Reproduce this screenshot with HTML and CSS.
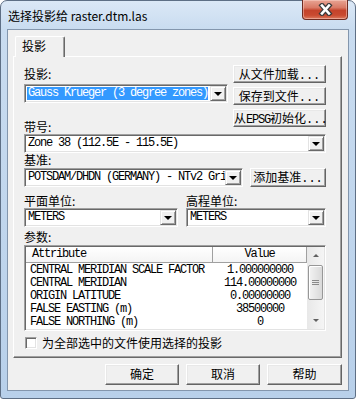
FILE: index.html
```html
<!DOCTYPE html>
<html lang="zh-CN">

<head>
    <meta charset="UTF-8">
    <title>选择投影给 raster.dtm.las</title>
    <link rel="stylesheet" href="styles.css">
</head>

<body>
    <div class="window">
        <div class="titlebar">
            <span class="title">选择投影给 raster.dtm.las</span>
            <div class="close-btn">
                <svg width="17" height="13" viewBox="0 0 17 13">
                    <path d="M5 2.5 L12 10.5 M12 2.5 L5 10.5" stroke="#3b3b3b" stroke-width="5" stroke-linecap="square" fill="none"/>
                    <path d="M5 2.5 L12 10.5 M12 2.5 L5 10.5" stroke="#ffffff" stroke-width="2.6" stroke-linecap="square" fill="none"/>
                </svg>
            </div>
        </div>

        <div class="client">
            <div class="tabs">
                <div class="tab">投影</div>
            </div>

            <div class="panel">
                <div class="top-row">
                    <div class="top-left">
                        <div class="label">投影:</div>
                        <div class="combo combo-proj">
                            <span class="combo-text"><span class="sel">Gauss Krueger (3 degree zones)</span></span>
                            <span class="drop"></span>
                        </div>
                        <div class="label label-zone">带号:</div>
                    </div>
                    <div class="side-buttons">
                        <div class="btn btn-side">从文件加载<span class="mono dots">...</span></div>
                        <div class="btn btn-side">保存到文件<span class="mono dots">...</span></div>
                        <div class="btn btn-side">从<span class="mono">EPSG</span>初始化<span class="mono dots">...</span></div>
                    </div>
                </div>

                <div class="combo combo-full">
                    <span class="combo-text">Zone 38 (112.5E - 115.5E)</span>
                    <span class="drop"></span>
                </div>

                <div class="label">基准:</div>
                <div class="datum-row">
                    <div class="combo combo-datum">
                        <span class="combo-text">POTSDAM/DHDN (GERMANY) - NTv2 Grid</span>
                        <span class="drop"></span>
                    </div>
                    <div class="btn btn-datum">添加基准<span class="mono dots">...</span></div>
                </div>

                <div class="units-grid">
                    <div class="label">平面单位:</div>
                    <div class="label">高程单位:</div>
                    <div class="combo">
                        <span class="combo-text">METERS</span>
                        <span class="drop"></span>
                    </div>
                    <div class="combo">
                        <span class="combo-text">METERS</span>
                        <span class="drop"></span>
                    </div>
                </div>

                <div class="label label-params">参数:</div>
                <div class="listbox">
                    <div class="list-main">
                        <div class="list-head">
                            <span class="col-attr">Attribute</span>
                            <span class="col-val">Value</span>
                        </div>
                        <div class="list-row"><span class="col-attr">CENTRAL MERIDIAN SCALE FACTOR</span><span class="col-val">1.000000000</span></div>
                        <div class="list-row"><span class="col-attr">CENTRAL MERIDIAN</span><span class="col-val">114.00000000</span></div>
                        <div class="list-row"><span class="col-attr">ORIGIN LATITUDE</span><span class="col-val">0.00000000</span></div>
                        <div class="list-row"><span class="col-attr">FALSE EASTING (m)</span><span class="col-val">38500000</span></div>
                        <div class="list-row"><span class="col-attr">FALSE NORTHING (m)</span><span class="col-val">0</span></div>
                    </div>
                    <div class="scrollbar">
                        <span class="arrow arrow-up"></span>
                        <div class="track">
                            <div class="thumb"><span class="grip"></span></div>
                        </div>
                        <span class="arrow arrow-down"></span>
                    </div>
                </div>

                <div class="check-row">
                    <span class="checkbox"></span>
                    <span>为全部选中的文件使用选择的投影</span>
                </div>
            </div>

            <div class="dialog-buttons">
                <div class="btn btn-dialog">确定</div>
                <div class="btn btn-dialog">取消</div>
                <div class="btn btn-dialog btn-help">帮助</div>
            </div>
        </div>
    </div>
</body>

</html>
```

FILE: styles.css
```css
* {
    box-sizing: border-box;
}

body {
    margin: 0;
    font-family: "Noto Sans CJK SC", "Liberation Sans", sans-serif;
    font-size: 12px;
    color: #000;
    background: #fff;
}

.mono {
    font-family: "Liberation Mono", "Noto Sans CJK SC", monospace;
    font-size: 12px;
    letter-spacing: -1.2px;
}

.dots {
    letter-spacing: 0;
}

/* window frame */
.window {
    width: 356px;
    height: 399px;
    border: 1px solid #5e6f85;
    border-radius: 7px 7px 3px 3px;
    background: linear-gradient(to bottom, #dbe8f6 0, #c9dcf0 28px, #b8d0ea 100%);
    padding: 0 6px 7px;
    display: flex;
    flex-direction: column;
}

.titlebar {
    height: 28px;
    display: flex;
    align-items: flex-start;
    flex: none;
}

.title {
    padding: 7px 0 0 1px;
    line-height: 16px;
    font-size: 12px;
}

.close-btn {
    margin-left: auto;
    margin-top: -1px;
    margin-right: 1px;
    width: 46px;
    height: 20px;
    border: 1px solid #6e2c22;
    border-top: none;
    border-radius: 0 0 4px 4px;
    background: linear-gradient(to bottom, #e8a494 0, #d97a66 40%, #c4432b 55%, #c94a30 80%, #dc7a5e 100%);
    box-shadow: inset 0 0 0 1px rgba(255, 220, 210, 0.45);
    display: flex;
    align-items: center;
    justify-content: center;
}

.client {
    flex: 1;
    border: 1px solid #8396ad;
    background: #f0f0f0;
    padding: 6px 6px 0 5px;
    display: flex;
    flex-direction: column;
}

/* tab */
.tabs {
    display: flex;
    padding-left: 2px;
}

.tab {
    position: relative;
    z-index: 1;
    margin-bottom: -1px;
    width: 50px;
    height: 21px;
    border: 1px solid;
    border-color: #fff #696969 transparent #fff;
    border-bottom: none;
    border-radius: 2px 2px 0 0;
    box-shadow: inset -1px 0 0 #a0a0a0;
    background: #f0f0f0;
    padding: 2px 0 0 6px;
    line-height: 14px;
}

.panel {
    border: 1px solid;
    border-color: #fff #696969 #696969 #fff;
    box-shadow: inset -1px -1px 0 #a0a0a0;
    padding: 8px 15px 7px 10px;
}

.label {
    line-height: 14px;
    height: 14px;
}

/* top area */
.top-row {
    display: flex;
    justify-content: space-between;
    align-items: flex-start;
}

.top-left {
    width: 204px;
    padding-top: 2px;
}

.combo-proj {
    margin-top: 3px;
}

.label-zone {
    margin-top: 17px;
}

.side-buttons {
    display: flex;
    flex-direction: column;
    gap: 4px;
    width: 93px;
}

/* push buttons */
.btn {
    border: 1px solid;
    border-color: #fff #646464 #646464 #fff;
    box-shadow: inset -1px -1px 0 #a0a0a0, inset 1px 1px 0 #e8e8e8;
    background: #f0f0f0;
    text-align: center;
    white-space: nowrap;
}

.btn-side {
    height: 18px;
    line-height: 15px;
}

/* combo boxes */
.combo {
    height: 19px;
    border: 1px solid;
    border-color: #a0a0a0 #fff #fff #a0a0a0;
    padding: 1px;
    box-shadow: inset 1px 1px 0 #696969, inset -1px -1px 0 #e3e3e3;
    background: #fff;
    display: flex;
}

.combo-text {
    flex: 1;
    min-width: 0;
    overflow: hidden;
    white-space: nowrap;
    padding-left: 2px;
    line-height: 15px;
    font-family: "Liberation Mono", monospace;
    font-size: 12px;
    letter-spacing: -1.2px;
}

.combo-proj .combo-text {
    padding: 1px 2px 1px 1px;
}

.sel {
    display: block;
    background: #3399ff;
    color: #fff;
    line-height: 13px;
    padding-left: 1px;
}

.drop {
    flex: none;
    width: 16px;
    height: 15px;
    border: 1px solid;
    border-color: #e3e3e3 #696969 #696969 #e3e3e3;
    box-shadow: inset 1px 1px 0 #fff, inset -1px -1px 0 #a0a0a0;
    background: #f0f0f0;
    display: flex;
    align-items: center;
    justify-content: center;
}

.drop::after {
    content: "";
    border-left: 4px solid transparent;
    border-right: 4px solid transparent;
    border-top: 4px solid #000;
    margin-top: 1px;
}

/* datum */
.datum-row {
    display: flex;
    gap: 7px;
    margin-top: 1px;
}

.combo-datum {
    width: 219px;
}

.btn-datum {
    width: 76px;
    height: 19px;
    line-height: 16px;
}

/* units */
.units-grid {
    display: grid;
    grid-template-columns: 154px 140px;
    column-gap: 8px;
    margin-top: 7px;
}

/* parameters list */
.label-params {
    margin-top: 3px;
}

.listbox {
    margin-top: 1px;
    height: 86px;
    border: 1px solid;
    border-color: #a0a0a0 #fff #fff #a0a0a0;
    padding: 1px;
    box-shadow: inset 1px 1px 0 #696969, inset -1px -1px 0 #e3e3e3;
    background: #fff;
    display: flex;
}

.list-main {
    flex: 1;
    overflow: hidden;
    font-family: "Liberation Mono", monospace;
    font-size: 12px;
    letter-spacing: -1.2px;
}

.list-head {
    display: flex;
    height: 16px;
    line-height: 15px;
    background: linear-gradient(to bottom, #fff, #f4f4f4);
    border-bottom: 1px solid #a0a0a0;
}

.list-head .col-attr {
    width: 187px;
    padding-left: 6px;
    border-right: 1px solid #a0a0a0;
}

.list-head .col-val {
    flex: 1;
    text-align: center;
    border-right: 1px solid #a0a0a0;
}

.list-row {
    display: flex;
    line-height: 13px;
}

.list-row .col-attr {
    width: 187px;
    padding-left: 4px;
}

.list-row .col-val {
    flex: 1;
    text-align: center;
}

.list-head + .list-row {
    margin-top: 1px;
}

.scrollbar {
    width: 17px;
    flex: none;
    display: flex;
    flex-direction: column;
    background: linear-gradient(to right, #e8e8e8, #f5f5f5);
}

.arrow {
    height: 17px;
    flex: none;
    display: flex;
    align-items: center;
    justify-content: center;
}

.arrow::after {
    content: "";
    border-left: 3px solid transparent;
    border-right: 3px solid transparent;
}

.arrow-up::after {
    border-bottom: 3px solid #606060;
}

.arrow-down::after {
    border-top: 3px solid #606060;
}

.track {
    flex: 1;
    padding: 1px 1px;
}

.thumb {
    height: 35px;
    border: 1px solid #979797;
    border-radius: 2px;
    background: linear-gradient(to right, #f3f3f3, #e6e6e6 50%, #d9d9d9);
    box-shadow: inset 1px 1px 0 #fff;
    display: flex;
    align-items: center;
    justify-content: center;
}

.grip {
    width: 7px;
    height: 5px;
    border-top: 1px solid #8a8a8a;
    border-bottom: 1px solid #8a8a8a;
    background: linear-gradient(to bottom, transparent 1px, #8a8a8a 1px, #8a8a8a 2px, transparent 2px);
}

/* checkbox */
.check-row {
    display: flex;
    align-items: center;
    gap: 5px;
    margin-top: 5px;
    line-height: 14px;
    padding-left: 1px;
}

.checkbox {
    width: 12px;
    height: 12px;
    border: 1px solid;
    border-color: #a0a0a0 #fff #fff #a0a0a0;
    box-shadow: inset 1px 1px 0 #696969, inset -1px -1px 0 #e3e3e3;
    background: #fff;
}

/* dialog buttons */
.dialog-buttons {
    display: flex;
    justify-content: flex-end;
    gap: 7px;
    margin-top: 6px;
}

.btn-dialog {
    width: 74px;
    height: 21px;
    line-height: 18px;
}

.btn-help {
    width: 75px;
}
```
